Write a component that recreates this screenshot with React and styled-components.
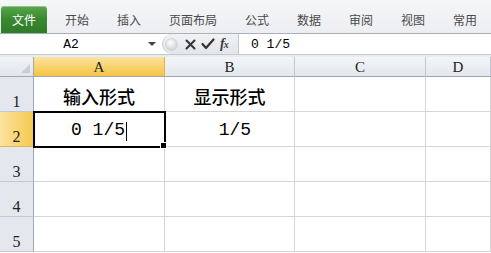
import React from "react";
import styled, { createGlobalStyle } from "styled-components";

const Global = createGlobalStyle`
  html, body { margin: 0; padding: 0; background: #fff; overflow: hidden; }
  #root { width: 491px; height: 253px; }
`;

const Screen = styled.div`
  width: 491px;
  height: 253px;
  overflow: hidden;
  display: flex;
  flex-direction: column;
  background: #fff;
`;

const TabBar = styled.div`
  height: 33px;
  flex: none;
  display: flex;
  align-items: flex-end;
  padding-left: 1px;
  background: linear-gradient(#f5f6f8, #eceef2);
  font-family: "Noto Sans CJK SC", "Noto Sans", sans-serif;
  font-size: 12px;
`;

const FileTab = styled.div`
  width: 54px;
  height: 27px;
  display: flex;
  align-items: center;
  justify-content: center;
  border-radius: 3px 3px 0 0;
  background: linear-gradient(#5aa84c, #3a8a31 45%, #2f7b28);
  box-shadow: inset 0 1px 0 rgba(255,255,255,0.35);
  color: #fff;
  margin-right: 4px;
`;

const Tab = styled.div`
  height: 27px;
  padding: 0 14px;
  display: flex;
  align-items: center;
  color: #4a4a4a;
  white-space: nowrap;
`;

const FormulaBar = styled.div`
  height: 20px;
  flex: none;
  display: flex;
  border-top: 1px solid #a9b0b9;
  border-bottom: 1px solid #c4c9d0;
  background: #fff;
`;

const Spacer = styled.div`
  height: 2px;
  flex: none;
  background: #e8ebef;
`;

const NameBox = styled.div`
  width: 162px;
  flex: none;
  display: flex;
  align-items: center;
`;

const NameText = styled.div`
  width: 142px;
  text-align: center;
  font-family: "Liberation Mono", monospace;
  font-size: 13px;
  color: #000;
`;

const DropArrow = styled.div`
  width: 0;
  height: 0;
  margin-left: 6px;
  border-left: 4px solid transparent;
  border-right: 4px solid transparent;
  border-top: 4px solid #444;
`;

const FxPanel = styled.div`
  width: 76px;
  flex: none;
  display: flex;
  align-items: center;
  border-radius: 10px 0 0 10px;
  background: linear-gradient(#f1f2f4, #e2e5e9);
  border-left: 1px solid #c9cdd3;
  box-sizing: border-box;
  padding-left: 2px;
`;

const Grip = styled.div`
  width: 13px;
  height: 13px;
  border-radius: 50%;
  background: radial-gradient(circle at 40% 35%, #ffffff, #d3d7dc 70%);
  border: 1px solid #d0d4d9;
  box-sizing: border-box;
  margin-right: 3px;
`;

const IconSlot = styled.div`
  width: 18px;
  height: 20px;
  display: flex;
  align-items: center;
  justify-content: center;
`;

const Fx = styled.div`
  font-family: "Liberation Serif", serif;
  font-style: italic;
  font-weight: bold;
  font-size: 14px;
  color: #3a3a3a;
  margin-left: 3px;
  letter-spacing: -1px;
  span { font-size: 10px; }
`;

const FormulaInput = styled.div`
  flex: 1;
  display: flex;
  align-items: center;
  border-left: 1px solid #c4c9d0;
  padding-left: 12px;
  font-family: "Liberation Mono", monospace;
  font-size: 13px;
  white-space: pre;
  color: #000;
`;

const Grid = styled.div`
  flex: 1;
  display: grid;
  grid-template-columns: 34px 131px 130px 131px 65px;
  grid-template-rows: 20px repeat(5, 35px);
`;

const Corner = styled.div`
  background: linear-gradient(#f1f3f6, #e1e6ec);
  border-right: 1px solid #9fa7b1;
  border-bottom: 1px solid #9fa7b1;
  position: relative;
  &::after {
    content: "";
    position: absolute;
    right: 3px;
    bottom: 3px;
    width: 0;
    height: 0;
    border-left: 9px solid transparent;
    border-bottom: 9px solid #c8ced6;
  }
`;

const ColHead = styled.div`
  display: flex;
  align-items: flex-end;
  justify-content: center;
  background: ${p => p.$active
    ? "linear-gradient(#fbe3a0, #f8d36f 50%, #f5c444)"
    : "linear-gradient(#f3f5f8, #e3e8ee)"};
  border-right: 1px solid ${p => p.$active ? "#e0b552" : "#c1c8d1"};
  border-bottom: 1px solid #9fa7b1;
  font-family: "Liberation Serif", serif;
  font-size: 15px;
  line-height: 18px;
  color: #222;
`;

const RowHead = styled.div`
  display: flex;
  align-items: flex-end;
  justify-content: center;
  background: ${p => p.$active
    ? "linear-gradient(90deg, #fbe3a0, #f6c94f)"
    : "#e4e8ee"};
  border-right: 1px solid #9fa7b1;
  border-bottom: 1px solid ${p => p.$active ? "#e0b552" : "#c1c8d1"};
  font-family: "Liberation Serif", serif;
  font-size: 16px;
  line-height: 18px;
  color: #222;
`;

const Cell = styled.div`
  position: relative;
  display: flex;
  align-items: flex-end;
  justify-content: center;
  border-right: 1px solid #d4d4d4;
  border-bottom: 1px solid #d4d4d4;
  padding-bottom: ${p => p.$mono ? "5px" : "4px"};
  box-sizing: border-box;
  font-family: ${p => p.$mono ? "\"Liberation Mono\", monospace" : "\"Noto Sans CJK SC\", sans-serif"};
  font-size: 18px;
  font-weight: ${p => p.$mono ? 400 : 500};
  line-height: 22px;
  white-space: pre;
  color: #000;
  ${p => p.$selected && `
    outline: 2px solid #000;
    outline-offset: -1px;
    z-index: 1;
    &::after {
      content: "";
      position: absolute;
      right: -3px;
      bottom: -3px;
      width: 5px;
      height: 5px;
      background: #000;
      border: 1px solid #fff;
    }
  `}
`;

const Caret = styled.span`
  display: inline-block;
  width: 1px;
  height: 19px;
  background: #000;
  margin-left: 1px;
  vertical-align: -3px;
`;

const tabs = ["开始", "插入", "页面布局", "公式", "数据", "审阅", "视图", "常用"];
const cols = ["A", "B", "C", "D"];

export default function App() {
  const rows = [
    ["输入形式", "显示形式", "", ""],
    ["0 1/5", " 1/5", "", ""],
    ["", "", "", ""],
    ["", "", "", ""],
    ["", "", "", ""],
  ];
  return (
    <Screen>
      <Global />
      <TabBar>
        <FileTab>文件</FileTab>
        {tabs.map(t => <Tab key={t}>{t}</Tab>)}
      </TabBar>
      <FormulaBar>
        <NameBox>
          <NameText>A2</NameText>
          <DropArrow />
        </NameBox>
        <FxPanel>
          <Grip />
          <IconSlot>
            <svg width="11" height="11" viewBox="0 0 11 11">
              <path d="M1.5 1.5 L9.5 9.5 M9.5 1.5 L1.5 9.5" stroke="#333" strokeWidth="2" strokeLinecap="round" />
            </svg>
          </IconSlot>
          <IconSlot>
            <svg width="14" height="12" viewBox="0 0 14 12">
              <path d="M1.5 6 L5 10 L12.5 1.5" stroke="#333" strokeWidth="2.2" fill="none" strokeLinecap="round" strokeLinejoin="round" />
            </svg>
          </IconSlot>
          <Fx>f<span>x</span></Fx>
        </FxPanel>
        <FormulaInput>0 1/5</FormulaInput>
      </FormulaBar>
      <Spacer />
      <Grid>
        <Corner />
        {cols.map(c => <ColHead key={c} $active={c === "A"}>{c}</ColHead>)}
        {rows.map((r, i) => (
          <React.Fragment key={i}>
            <RowHead $active={i === 1}>{i + 1}</RowHead>
            {r.map((v, j) => (
              <Cell key={j} $mono={i === 1} $selected={i === 1 && j === 0}>
                {v}
                {i === 1 && j === 0 && <Caret />}
              </Cell>
            ))}
          </React.Fragment>
        ))}
      </Grid>
    </Screen>
  );
}
